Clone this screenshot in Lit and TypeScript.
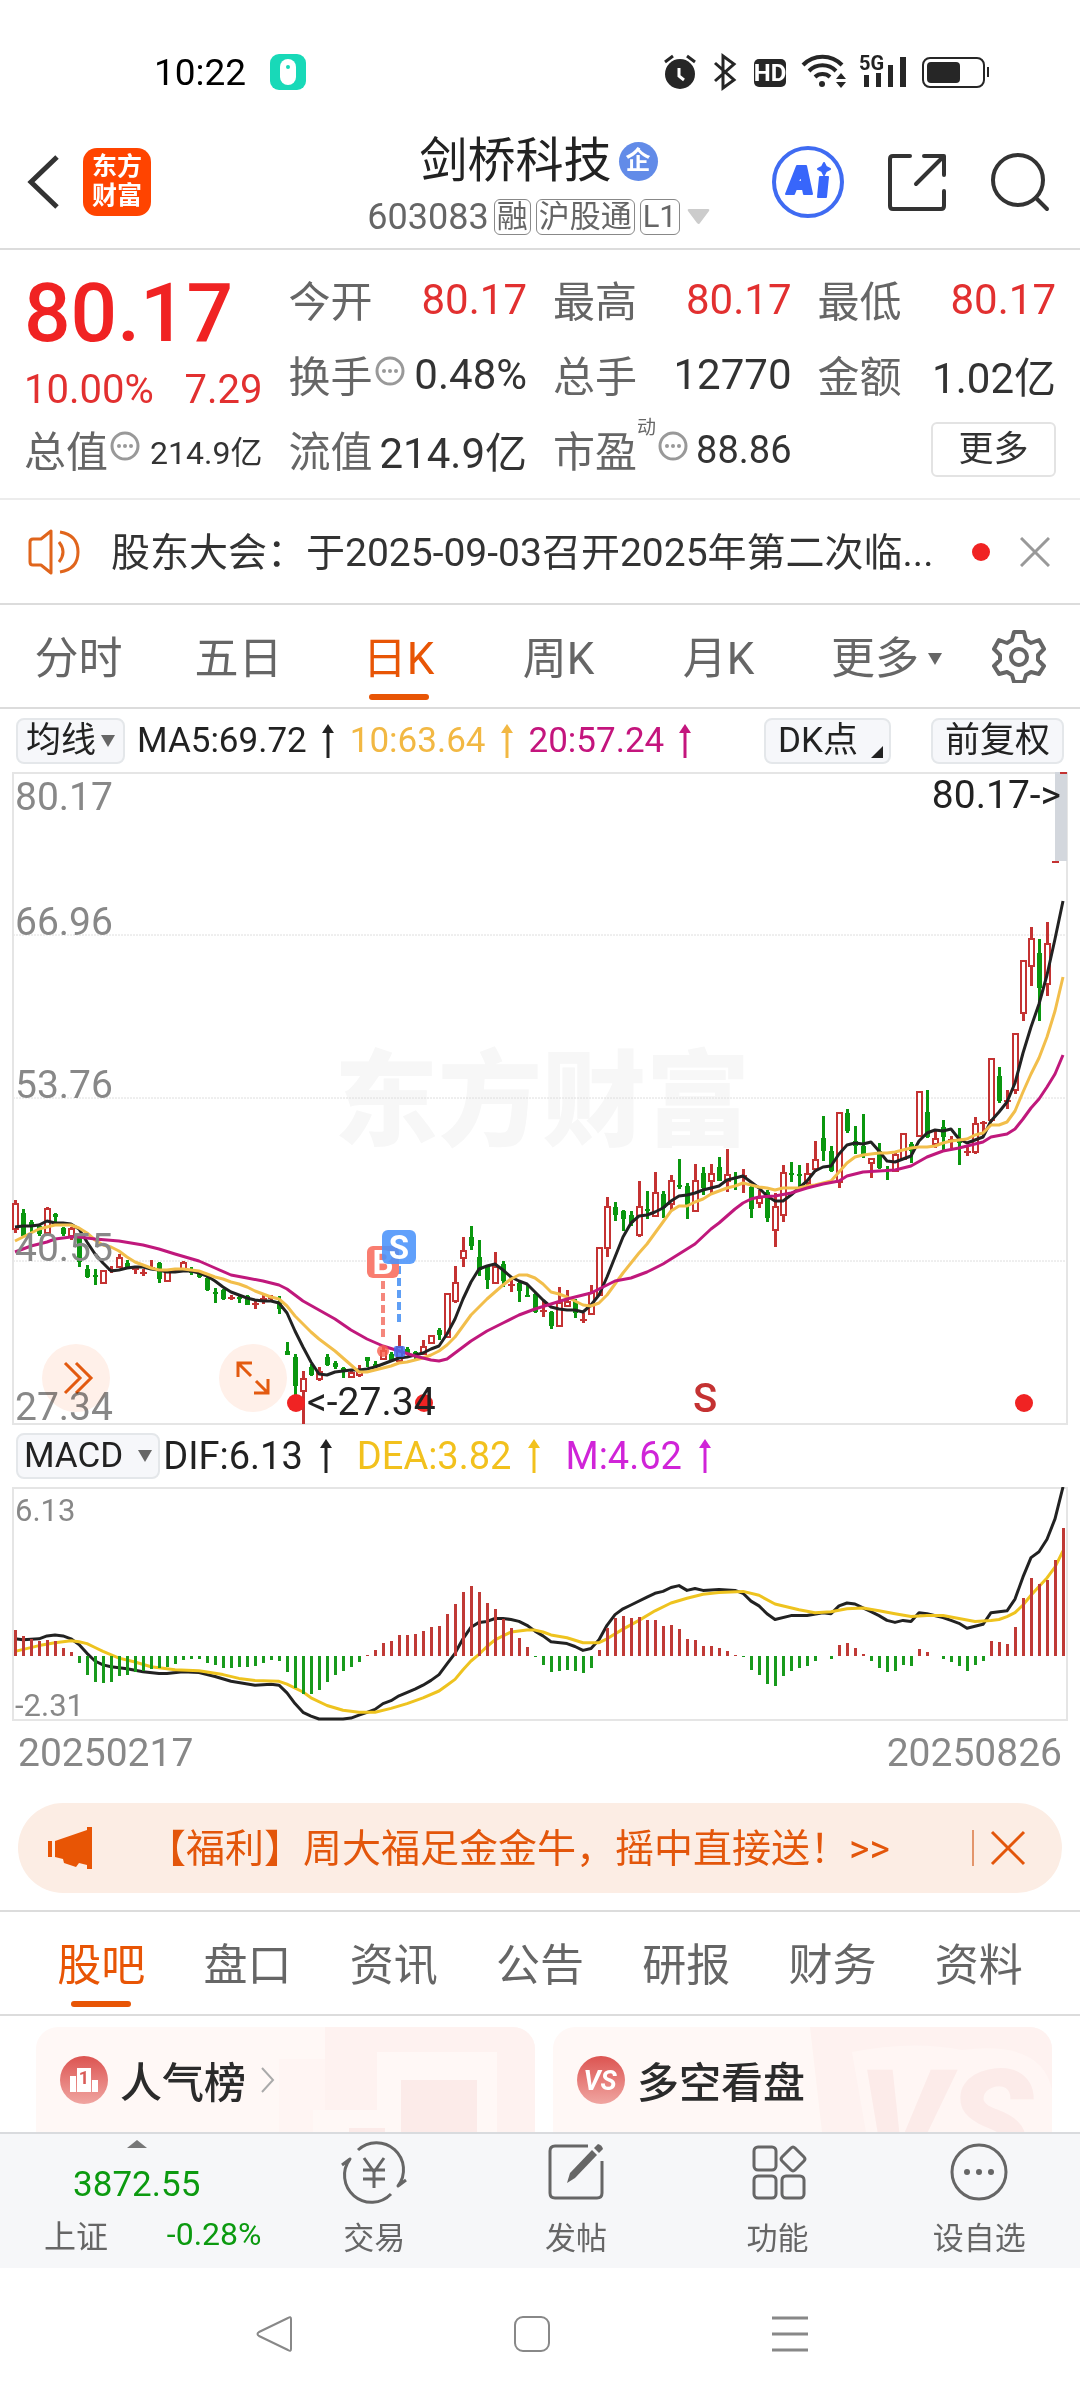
import { LitElement, html, svg, css } from "lit";
import { customElement } from "lit/decorators.js";

type Candle = [string, number, number, number, number];
type Point = [number, number];

/* One entry per trading day: direction, high, low, body top, body bottom (chart units). */
const CANDLES: Candle[] = [
  ["r", 428, 461, 432, 457], ["g", 437, 464, 441, 464], ["g", 448, 460, 450, 453], ["g", 453, 464, 454, 462],
  ["r", 435, 463, 437, 461], ["g", 441, 450, 442, 445], ["g", 455, 464, 456, 462], ["r", 455, 468, 457, 464],
  ["g", 464, 495, 465, 490], ["g", 493, 506, 497, 505], ["g", 497, 513, 503, 505], ["r", 499, 512, 499, 511],
  ["r", 494, 501, 497, 499], ["r", 482, 496, 486, 495], ["g", 488, 497, 491, 497], ["r", 494, 502, 496, 497],
  ["r", 497, 504, 500, 502], ["r", 488, 498, 495, 497], ["g", 490, 511, 491, 507], ["r", 498, 510, 500, 509],
  ["r", 498, 500, 498, 500], ["r", 489, 499, 491, 497], ["g", 495, 503, 497, 501], ["g", 500, 506, 501, 505],
  ["g", 505, 519, 506, 518], ["g", 516, 531, 520, 521], ["g", 517, 528, 518, 527], ["r", 523, 528, 525, 527],
  ["g", 523, 531, 525, 526], ["g", 523, 533, 524, 533], ["r", 528, 537, 531, 533], ["r", 523, 532, 526, 528],
  ["r", 523, 529, 525, 528], ["g", 524, 542, 529, 537], ["g", 570, 583, 579, 583], ["g", 582, 626, 585, 614],
  ["r", 599, 652, 607, 619], ["g", 592, 604, 595, 603], ["r", 595, 609, 600, 607], ["g", 582, 594, 585, 593],
  ["g", 589, 597, 591, 595], ["g", 595, 606, 596, 599], ["r", 599, 605, 601, 605], ["r", 593, 605, 599, 603],
  ["g", 585, 595, 585, 589], ["g", 589, 596, 592, 593], ["r", 575, 588, 579, 587], ["g", 580, 589, 582, 588],
  ["r", 563, 590, 575, 589], ["g", 575, 583, 577, 581], ["g", 579, 588, 580, 581], ["r", 568, 583, 575, 582],
  ["r", 563, 571, 564, 571], ["g", 556, 568, 558, 563], ["r", 521, 565, 522, 565], ["r", 494, 531, 511, 529],
  ["r", 465, 495, 479, 486], ["g", 454, 478, 465, 474], ["g", 468, 504, 485, 498], ["g", 493, 517, 494, 508],
  ["r", 480, 512, 495, 511], ["g", 489, 515, 492, 509], ["r", 508, 520, 512, 513], ["g", 509, 530, 511, 519],
  ["g", 513, 525, 523, 525], ["g", 521, 541, 522, 540], ["r", 528, 545, 538, 541], ["g", 539, 557, 540, 554],
  ["r", 515, 555, 531, 554], ["r", 518, 535, 530, 534], ["g", 527, 546, 529, 541], ["r", 541, 551, 547, 549],
  ["r", 513, 543, 521, 542], ["r", 475, 524, 476, 523], ["r", 425, 485, 435, 476], ["g", 430, 449, 435, 443],
  ["g", 438, 459, 439, 447], ["g", 439, 454, 443, 451], ["r", 409, 465, 435, 463], ["g", 419, 447, 437, 438],
  ["r", 400, 445, 421, 444], ["g", 419, 446, 422, 436], ["r", 403, 439, 409, 432], ["g", 387, 417, 413, 415],
  ["g", 411, 447, 414, 434], ["r", 392, 439, 409, 439], ["g", 395, 423, 401, 416], ["r", 392, 421, 402, 409],
  ["g", 385, 409, 395, 409], ["r", 377, 420, 403, 409], ["g", 400, 418, 405, 406], ["r", 397, 421, 403, 405],
  ["g", 414, 446, 415, 437], ["r", 418, 436, 426, 431], ["g", 418, 450, 420, 446], ["r", 421, 475, 435, 458],
  ["r", 393, 450, 401, 443], ["g", 390, 410, 401, 402], ["g", 393, 415, 402, 403], ["r", 391, 413, 402, 411],
  ["r", 369, 400, 388, 397], ["g", 344, 389, 366, 379], ["g", 374, 400, 379, 399], ["r", 340, 416, 341, 410],
  ["g", 337, 361, 341, 359], ["g", 354, 382, 369, 374], ["g", 342, 386, 374, 384], ["r", 386, 406, 387, 391],
  ["g", 371, 397, 379, 396], ["g", 394, 408, 397, 398], ["r", 379, 400, 383, 399], ["r", 362, 388, 362, 387],
  ["g", 370, 391, 372, 379], ["r", 319, 365, 320, 364], ["g", 318, 366, 340, 365], ["r", 359, 376, 367, 372],
  ["g", 348, 378, 355, 365], ["r", 364, 376, 367, 369], ["g", 356, 393, 369, 370], ["r", 374, 384, 379, 381],
  ["r", 345, 382, 352, 380], ["r", 349, 364, 350, 353], ["r", 286, 350, 287, 348], ["g", 295, 331, 304, 329],
  ["r", 318, 337, 328, 330], ["r", 261, 322, 262, 318], ["r", 188, 249, 189, 241], ["r", 155, 214, 167, 194],
  ["g", 167, 249, 181, 216], ["r", 150, 224, 172, 212], ["r", 89, 91, 89, 91], ["r", 0, 2, 0, 2],
];

const MA5: number[] = [
  455, 454, 454, 453, 449, 451, 451, 452, 457, 470, 482, 491, 499, 498, 496, 495, 495, 497, 498, 500, 500, 499, 499,
  501, 504, 509, 515, 520, 523, 526, 528, 529, 529, 531, 541, 559, 575, 590, 602, 603, 600, 599, 598, 598, 597, 595,
  592, 589, 586, 585, 583, 581, 577, 574, 562, 547, 527, 510, 497, 494, 492, 498, 505, 509, 512, 520, 528, 535, 537,
  538, 538, 540, 533, 523, 505, 485, 465, 451, 444, 443, 440, 436, 429, 424, 423, 421, 418, 416, 414, 408, 406, 404,
  410, 416, 424, 429, 429, 423, 416, 409, 399, 395, 394, 382, 373, 371, 372, 370, 379, 389, 390, 387, 384, 369, 361,
  358, 359, 357, 367, 371, 368, 365, 349, 340, 330, 311, 281, 255, 232, 203, 167, 129,
];
const MA10: number[] = [
  469, 465, 461, 457, 455, 453, 453, 453, 456, 461, 468, 473, 475, 479, 485, 490, 493, 496, 498, 498, 497, 497, 498,
  499, 502, 505, 507, 510, 512, 515, 519, 522, 525, 527, 534, 544, 552, 560, 567, 573, 579, 586, 593, 600, 600, 598,
  596, 594, 591, 590, 588, 586, 583, 579, 573, 565, 554, 543, 535, 527, 520, 513, 507, 503, 503, 506, 512, 520, 522,
  525, 529, 533, 534, 531, 523, 512, 501, 491, 481, 472, 461, 450, 439, 434, 434, 430, 427, 422, 419, 416, 414, 411,
  413, 415, 416, 418, 416, 416, 416, 414, 413, 411, 409, 400, 391, 385, 383, 382, 381, 381, 380, 378, 376, 375, 375,
  374, 371, 369, 368, 367, 363, 361, 353, 353, 350, 339, 320, 302, 286, 265, 239, 205,
];
const MA20: Point[] = [
  [0, 480], [2, 474], [4, 470], [5, 467], [7, 465], [8, 465], [10, 467], [13, 469], [16, 473], [18, 477], [20, 482],
  [23, 489], [25, 496], [27, 503], [29, 506], [31, 509], [33, 513], [34, 517], [36, 529], [38, 538], [40, 547],
  [42, 558], [44, 567], [46, 574], [48, 579], [50, 584], [52, 588], [53, 589], [54, 587], [55, 581], [57, 569],
  [59, 559], [61, 551], [63, 543], [65, 537], [67, 532], [69, 527], [71, 523], [72, 521], [73, 517], [74, 513],
  [75, 509], [77, 506], [79, 500], [81, 492], [83, 482], [85, 472], [87, 457], [88, 451], [90, 437], [91, 431],
  [92, 427], [93, 425], [95, 424], [97, 421], [99, 416], [101, 412], [103, 409], [104, 404], [106, 400], [108, 399],
  [110, 398], [112, 394], [114, 385], [116, 379], [118, 376], [120, 372], [121, 370], [122, 365], [124, 362],
  [125, 357], [126, 347], [127, 336], [128, 327], [129, 315], [130, 302], [131, 283],
];

const HISTOGRAM: number[] = [
  27, 21, 18, 15, 17, 16, 8, 4, -7, -20, -27, -28, -27, -21, -20, -17, -15, -13, -12, -11, -8, -4, -3, -3, -7, -9, -12,
  -12, -11, -11, -10, -7, -4, -5, -17, -33, -39, -39, -35, -27, -20, -16, -11, -6, 1, 6, 13, 16, 22, 22, 23, 26, 30,
  31, 43, 54, 66, 72, 66, 55, 49, 38, 29, 19, 9, -1, -9, -17, -15, -14, -16, -18, -12, 6, 29, 39, 41, 39, 40, 37, 37,
  31, 32, 28, 18, 17, 10, 10, 8, 5, 1, -1, -14, -20, -29, -31, -21, -16, -12, -10, -5, 0, -3, 11, 13, 8, 2, -5, -12,
  -17, -15, -9, -10, 7, 4, 0, -3, -6, -10, -15, -9, -5, 16, 14, 12, 30, 60, 81, 74, 79, 99, 132,
];
const DIF: Point[] = [
  [0, 157], [1, 158], [3, 157], [4, 154], [5, 153], [6, 154], [7, 157], [8, 163], [9, 172], [10, 180], [11, 184],
  [12, 186], [14, 188], [16, 191], [18, 193], [19, 193], [21, 191], [23, 192], [25, 196], [27, 201], [30, 205],
  [32, 204], [33, 205], [34, 213], [35, 224], [36, 233], [37, 237], [38, 240], [41, 240], [42, 239], [43, 236],
  [44, 233], [45, 230], [46, 224], [47, 221], [48, 216], [50, 209], [51, 205], [52, 200], [53, 194], [54, 183],
  [55, 172], [56, 157], [57, 145], [58, 140], [59, 139], [60, 136], [61, 136], [62, 137], [63, 139], [64, 143],
  [65, 149], [66, 154], [67, 160], [69, 162], [70, 165], [71, 169], [72, 167], [73, 158], [74, 143], [75, 132],
  [76, 126], [77, 122], [79, 114], [80, 110], [81, 108], [82, 104], [83, 102], [84, 107], [85, 105], [86, 107],
  [88, 106], [90, 107], [91, 110], [92, 118], [93, 123], [94, 131], [95, 137], [97, 133], [99, 133], [101, 130],
  [102, 131], [103, 123], [104, 120], [105, 121], [106, 125], [107, 129], [108, 133], [109, 138], [110, 140],
  [111, 138], [112, 139], [113, 130], [114, 131], [116, 135], [117, 138], [118, 141], [119, 146], [120, 144],
  [121, 142], [122, 130], [124, 128], [125, 116], [126, 93], [127, 73], [128, 67], [129, 54], [130, 33], [131, 0],
];
const DEA: Point[] = [
  [0, 170], [3, 164], [5, 161], [7, 159], [8, 160], [9, 162], [10, 166], [11, 170], [13, 177], [15, 181], [17, 186],
  [20, 189], [23, 190], [26, 194], [28, 198], [30, 200], [33, 201], [34, 204], [36, 212], [37, 218], [39, 226],
  [41, 231], [43, 233], [45, 233], [47, 229], [49, 224], [51, 218], [53, 211], [54, 205], [55, 199], [56, 189],
  [57, 180], [58, 173], [59, 165], [60, 158], [61, 154], [62, 150], [64, 148], [65, 148], [66, 150], [67, 153],
  [69, 156], [71, 161], [73, 161], [74, 157], [76, 147], [78, 138], [80, 128], [82, 120], [84, 115], [86, 111],
  [88, 109], [91, 108], [93, 112], [95, 121], [98, 127], [100, 130], [102, 129], [104, 126], [106, 125], [108, 128],
  [110, 131], [112, 134], [114, 133], [116, 133], [118, 136], [120, 139], [122, 138], [123, 137], [124, 134],
  [125, 130], [126, 122], [127, 112], [128, 103], [129, 94], [130, 83], [131, 66],
];

const STEP = 8;
const xAt = (day: number) => 3 + day * STEP;
const line = (points: Point[], scale = 1) =>
  points.map(([day, y]) => `${xAt(day)},${Math.round(y * scale * 10) / 10}`).join(" ");
const daily = (values: number[]): Point[] => values.map((y, day) => [day, y]);

/* The MACD values are stored for a panel of 241 units and drawn in one of 233. */
const MACD_SCALE = 233 / 241;
const MACD_ZERO = 169;

const upArrow = () => html`<svg class="arrow" viewBox="0 0 14 34" aria-hidden="true">
  <path d="M7 3V34" stroke="currentColor" stroke-width="3" /><path d="M7 0l6 9H1z" fill="currentColor" />
</svg>`;
const caret = () => html`<svg class="caret" viewBox="0 0 14 14" aria-hidden="true">
  <path d="M0 1h14L7 13z" fill="currentColor" />
</svg>`;
const infoDots = () => html`<svg class="info" viewBox="0 0 30 30" aria-hidden="true">
  <circle cx="15" cy="15" r="13" fill="none" stroke="#999" stroke-width="3" />
  <circle cx="9" cy="15" r="2" fill="#999" /><circle cx="15" cy="15" r="2" fill="#999" />
  <circle cx="21" cy="15" r="2" fill="#999" />
</svg>`;

const sharedText = css`
  :host {
    display: block;
    font-family: Roboto, "Noto Sans CJK SC", sans-serif;
  }
  svg {
    display: block;
    flex: none;
  }
`;

@customElement("kline-chart")
export class KlineChart extends LitElement {
  static styles = [
    sharedText,
    css`
      .frame { position: relative; }
      .plot { width: 100%; height: auto; }
      .axis { font-size: 39px; fill: #888; }
      .note { font-size: 39px; fill: #222; }
      .watermark { font-size: 104px; font-weight: 900; fill: #f7f7f7; }
      .mark { font-size: 33px; font-weight: 700; fill: #fff; text-anchor: middle; }
      .signal { font-size: 40px; font-weight: 500; fill: #c43232; text-anchor: middle; }
      .float {
        position: absolute;
        bottom: 13px;
        width: 68px;
        height: 68px;
        padding: 0;
        border: 0;
        border-radius: 50%;
        background: #fff0e9;
        mix-blend-mode: multiply;
        display: grid;
        place-items: center;
      }
      .float svg { width: 36px; height: 36px; }
      .forward { left: 30px; }
      .expand { left: 207px; }
    `,
  ];

  private candle([kind, high, low, top, bottom]: Candle, day: number) {
    const x = xAt(day);
    if (kind === "g") {
      return svg`<rect x=${x - 1} y=${high} width="3" height=${low - high} fill="#0a970f" />
        <rect x=${x - 2} y=${top} width="5" height=${Math.max(bottom - top, 2)} fill="#0a970f" />`;
    }
    if (bottom - top < 4) {
      return svg`<rect x=${x - 1} y=${high} width="3" height=${low - high} fill="#c43232" />
        <rect x=${x - 3} y=${top} width="7" height="2" fill="#c43232" />`;
    }
    return svg`<rect x=${x - 1} y=${high} width="3" height=${low - high} fill="#c43232" />
      <rect x=${x - 2} y=${top} width="5" height=${bottom - top} fill="#fff" stroke="#c43232" stroke-width="2" />`;
  }

  render() {
    return html`<div class="frame">
      <svg class="plot" viewBox="0 0 1056 653" role="img" aria-label="日K线图">
        <text class="watermark" x="322" y="366">东方财富</text>
        ${[163, 326, 489].map(
          (y) => svg`<path d="M1 ${y}H1055" stroke="#dedede" stroke-width="1" stroke-dasharray="2 1" />`,
        )}
        <rect x="1" y="1" width="1054" height="651" fill="none" stroke="#e5e5e5" stroke-width="2" />
        <rect x="1043" y="0" width="12" height="89" fill="#d3d7dd" />
        ${CANDLES.map((c, day) => this.candle(c, day))}
        <g fill="none" stroke-width="3" stroke-linejoin="round">
          <polyline points=${line(daily(MA5))} stroke="#222" />
          <polyline points=${line(daily(MA10))} stroke="#f2be4b" />
          <polyline points=${line(MA20)} stroke="#c0187c" />
        </g>
        <circle cx="371" cy="579" r="6" fill="#f7604f" fill-opacity=".8" />
        <rect x="382" y="574" width="11" height="11" rx="2" fill="#3f6df0" fill-opacity=".85" />
        <g fill="none" stroke-width="4" stroke-dasharray="8 4">
          <path d="M371 509V566" stroke="#f5877c" /><path d="M387 494V550" stroke="#5f9ff5" />
        </g>
        <rect x="355" y="474" width="32" height="32" rx="6" fill="#f97d70" />
        <text class="mark" x="371" y="502">B</text>
        <rect x="370" y="458" width="34" height="34" rx="6" fill="#4a93fb" fill-opacity=".88" />
        <text class="mark" x="387" y="487">S</text>
        <g fill="#f02323">
          <circle cx="284" cy="631" r="9" /><circle cx="412" cy="631" r="9" /><circle cx="1012" cy="631" r="9" />
        </g>
        <text class="signal" x="693" y="640">S</text>
        <text class="axis" x="3" y="38">80.17</text>
        <text class="axis" x="3" y="163">66.96</text>
        <text class="axis" x="3" y="326">53.76</text>
        <text class="axis" x="3" y="489">40.55</text>
        <text class="axis" x="3" y="648">27.34</text>
        <text class="note" x="1049" y="36" text-anchor="end">80.17-&gt;</text>
        <text class="note" x="295" y="643">&lt;-27.34</text>
      </svg>
      <button class="float forward" aria-label="快进">
        <svg viewBox="0 0 36 36" fill="none" stroke="#e35a10" stroke-width="3">
          <path d="M7 3l15 15L7 33M18 3l15 15-15 15" />
        </svg>
      </button>
      <button class="float expand" aria-label="全屏">
        <svg viewBox="0 0 36 36" fill="none" stroke="#e35a10" stroke-width="3">
          <path d="M3 17V3h14M3 3l13 13M33 19v14H19M33 33L21 21" />
        </svg>
      </button>
    </div>`;
  }
}

@customElement("macd-chart")
export class MacdChart extends LitElement {
  static styles = [
    sharedText,
    css`
      .plot { width: 100%; height: auto; }
      .axis { font-size: 31px; fill: #888; }
    `,
  ];

  private bar(value: number, day: number) {
    const height = Math.round(Math.abs(value) * MACD_SCALE);
    return svg`<rect x=${xAt(day) - 1} y=${value > 0 ? MACD_ZERO - height : MACD_ZERO} width="3" height=${height}
      fill=${value > 0 ? "#c03a36" : "#189a1c"} />`;
  }

  render() {
    return html`<svg class="plot" viewBox="0 0 1056 234" role="img" aria-label="MACD">
      <rect x="1" y="1" width="1054" height="232" fill="none" stroke="#e5e5e5" stroke-width="2" />
      <text class="axis" x="3" y="34">6.13</text>
      <text class="axis" x="3" y="229">-2.31</text>
      <g fill="none" stroke-width="3" stroke-linejoin="round">
        <polyline points=${line(DIF, MACD_SCALE)} stroke="#222" />
        <polyline points=${line(DEA, MACD_SCALE)} stroke="#eec31f" />
      </g>
      ${HISTOGRAM.map((v, day) => this.bar(v, day))}
    </svg>`;
  }
}

@customElement("app-root")
export class AppRoot extends LitElement {
  static styles = [
    sharedText,
    css`
      :host { background: #fff; color: #222; }
      * { box-sizing: border-box; }
      button { font: inherit; color: inherit; background: none; border: 0; padding: 0; margin: 0; }
      a { color: inherit; text-decoration: none; }
      dl, dd, dt, h1, h2, p { margin: 0; font-weight: 400; }

      .status { display: flex; align-items: center; justify-content: space-between; height: 114px; padding: 30px 90px 0 154px; }
      .clock { display: flex; align-items: center; gap: 24px; font-size: 37px; color: #000; }
      .clock svg { width: 36px; height: 36px; }
      .system svg { width: 326px; height: 36px; overflow: visible; }
      .hd { font-size: 24px; font-weight: 700; fill: #fff; }
      .net { font-size: 20px; font-weight: 700; fill: #222; }

      .top { display: grid; grid-template-columns: 1fr auto 1fr; align-items: center; height: 136px; padding: 0 30px 0 27px; border-bottom: 2px solid #dcdcdc; }
      .left, .right { display: flex; align-items: center; padding-top: 2px; }
      .left { gap: 24px; }
      .left .back svg { width: 32px; height: 56px; }
      .logo { width: 68px; height: 68px; border-radius: 14px; background: #ff4400; color: #fff; font-size: 25px; font-weight: 700; line-height: 29px; text-align: center; padding: 4px 8px; }
      .right { justify-content: flex-end; gap: 43px; }
      .ai svg { width: 72px; height: 72px; }
      .share svg, .search svg { width: 60px; height: 60px; }
      .title { display: flex; flex-direction: column; align-items: center; gap: 7px; padding-top: 9px; }
      .name { display: flex; align-items: center; gap: 7px; }
      .name h1 { font-size: 48px; line-height: 56px; }
      .corp { width: 39px; height: 39px; border-radius: 50%; background: #628be8; color: #fff; font-size: 25px; font-weight: 700; line-height: 38px; text-align: center; }
      .code { display: flex; align-items: center; gap: 5px; font-size: 36px; line-height: 42px; color: #666; }
      .tag { font-size: 31px; line-height: 34px; padding: 0 2px; border: 1px solid #888; border-radius: 6px; }
      .pick { padding-left: 2px; }
      .pick svg { width: 23px; height: 16px; }

      .quote { display: grid; grid-template-columns: repeat(4, 1fr); grid-auto-rows: 75px; column-gap: 26px; padding: 12px 24px 11px 24px; border-bottom: 2px solid #ececec; font-size: 42px; }
      .price { grid-row: span 2; color: #f02323; }
      .last { font-size: 82px; line-height: 102px; font-weight: 500; }
      .change { display: flex; justify-content: space-between; font-size: 40px; line-height: 52px; color: #e23030; }
      .cell { display: flex; align-items: center; justify-content: space-between; white-space: nowrap; }
      .cell dt { display: flex; align-items: center; color: #666; padding-bottom: 2px; }
      .cell dd { color: #333; }
      .cell .up { color: #e23030; }
      .cell .small { font-size: 32px; }
      .cell .mid { font-size: 38px; }
      .info { width: 30px; height: 30px; margin: 0 0 6px 2px; }
      .sup { font-size: 19px; align-self: flex-start; line-height: 20px; }
      .more { display: flex; align-items: center; justify-content: flex-end; }
      .more button { width: 125px; height: 55px; border: 2px solid #e3e3e3; border-radius: 6px; font-size: 35px; line-height: 48px; color: #333; }

      .notice { display: flex; align-items: center; height: 105px; padding: 0 30px 0 28px; border-bottom: 2px solid #dcdcdc; font-size: 39px; color: #333; }
      .horn { width: 52px; height: 46px; margin-right: 31px; }
      .notice p { flex: 1; white-space: nowrap; padding-bottom: 6px; }
      .unread { width: 18px; height: 18px; border-radius: 50%; background: #f02323; margin-right: 30px; }
      .close svg { width: 30px; height: 30px; }

      .periods { display: grid; grid-template-columns: repeat(5, 160fr) 176fr 86fr; height: 104px; padding-right: 18px; border-bottom: 2px solid #dcdcdc; }
      .tab { display: flex; flex-direction: column; align-items: center; justify-content: flex-end; gap: 5px; font-size: 44px; line-height: 60px; color: #666; white-space: nowrap; padding-bottom: 7px; }
      .tab::after { content: ""; width: 60px; height: 6px; border-radius: 3px; }
      .periods .tab { padding-right: 3px; }
      .tab.on { color: #e85505; }
      .tab.on::after { background: #e85505; }
      .drop { display: flex; align-items: center; gap: 9px; }
      .gear { display: grid; place-items: center; }
      .gear svg { width: 54px; height: 54px; }
      .caret { width: 14px; height: 14px; color: #666; }

      .legend { display: flex; align-items: center; height: 63px; padding: 0 16px; font-size: 35px; white-space: nowrap; }
      .legend .pill { display: flex; align-items: center; gap: 5px; height: 46px; padding: 0 8px; border: 2px solid #e4e7ea; border-radius: 8px; background: #f6f7fa; line-height: 40px; }
      .series { display: flex; align-items: center; gap: 14px; margin-right: 15px; }
      .arrow { width: 14px; height: 34px; }
      .pill + .series { margin-left: 12px; }
      .c5 { color: #222; }
      .c10 { color: #f2b843; }
      .c20 { color: #c4157d; }
      .options { margin-left: auto; display: flex; gap: 40px; }
      .legend .options .pill { padding: 0 12px; }
      .corner { width: 12px; height: 12px; align-self: flex-end; margin: 0 -6px 4px 8px; }
      .legend.macd { height: 62px; }
      .macd .series { font-size: 38px; gap: 16px; margin-right: 24px; }
      .legend.macd .pill { gap: 15px; padding: 0 6px; }
      .macd .pill + .series { margin-left: 3px; }
      .cdea { color: #f2c11d; }
      .cm { color: #d024d8; }
      .chart { padding: 0 12px; }
      .dates { display: flex; justify-content: space-between; align-items: center; height: 64px; padding: 0 18px; font-size: 39px; color: #888; }

      .banner { display: flex; align-items: center; height: 90px; margin: 18px 18px 17px; padding: 0 36px 0 28px; border-radius: 45px; background: #fcede4; color: #e3560b; font-size: 39px; white-space: nowrap; }
      .banner .speaker { width: 48px; height: 42px; margin-right: 53px; }
      .banner a { flex: 1; padding-bottom: 6px; }
      .banner .close { border-left: 2px solid #e3956b; padding-left: 16px; }
      .banner .close svg { width: 36px; height: 36px; }

      .sections { display: grid; grid-template-columns: repeat(7, 1fr); height: 106px; padding: 0 28px; border-top: 2px solid #dcdcdc; border-bottom: 2px solid #dcdcdc; }

      .cards { display: grid; grid-template-columns: 1fr 1fr; gap: 18px; padding: 11px 28px 0 36px; }
      .card { position: relative; display: flex; align-items: center; height: 105px; padding: 0 24px; border-radius: 22px 22px 0 0; overflow: hidden; background: #fff8f6; }
      .deco { position: absolute; right: 0; top: 0; height: 105px; width: 256px; }
      .badge { width: 48px; height: 48px; margin-right: 12px; z-index: 1; }
      .card h2 { font-size: 42px; font-weight: 500; color: #2b2b2b; z-index: 1; }
      .chev { width: 16px; height: 26px; margin-left: 14px; z-index: 1; }
      .vs { font-size: 27px; font-weight: 700; font-style: italic; fill: #fff; text-anchor: middle; }
      .one { font-size: 18px; font-weight: 700; fill: #d95c58; text-anchor: middle; }
      .ghost { font-size: 140px; font-weight: 900; font-style: italic; fill: #fcebe9; }

      .bar { display: grid; grid-template-columns: 274fr repeat(4, 202fr); height: 136px; background: #f6f7f9; border-top: 2px solid #d9dbde; color: #666; }
      .index { display: grid; grid-template-rows: 20px 60px 40px; justify-items: center; align-items: center; font-size: 35px; color: #0c9a10; }
      .index > svg { width: 20px; height: 8px; }
      .pair { display: flex; align-items: center; justify-content: space-between; width: 100%; padding: 0 12px 0 44px; font-size: 32px; }
      .pair .market { color: #666; }
      .action { display: flex; flex-direction: column; align-items: center; gap: 14px; padding-top: 8px; font-size: 31px; line-height: 46px; }
      .action svg { width: 66px; height: 60px; overflow: visible; }

      .nav { display: grid; grid-template-columns: repeat(3, 1fr); height: 132px; padding: 0 161px 0 145px; }
      .nav button { display: grid; place-items: center; }
      .nav svg { width: 38px; height: 38px; }
    `,
  ];

  private statusBar() {
    return html`<div class="status">
      <div class="clock">
        <span>10:22</span>
        <svg viewBox="0 0 36 36">
          <rect width="36" height="36" rx="9" fill="#18d9b8" />
          <rect x="10" y="5" width="16" height="26" rx="8" fill="#fff" />
          <circle cx="18" cy="13" r="2" fill="#18d9b8" />
        </svg>
      </div>
      <div class="system">
        <svg viewBox="664 54 326 36" role="img" aria-label="系统状态">
          <g fill="none" stroke="#262626" stroke-width="3">
            <path d="M665 62l8-6M687 56l8 6" />
            <path d="M715 63l19 17-11 8V56l11 8-19 17" />
            <rect x="923" y="58" width="61" height="29" rx="7" stroke-width="2" />
            <path d="M988 67v10" stroke-width="2" />
          </g>
          <circle cx="680" cy="74" r="15" fill="#262626" />
          <path d="M679 68v8l5 4" fill="none" stroke="#fff" stroke-width="3" />
          <rect x="754" y="59" width="32" height="28" rx="5" fill="#262626" />
          <text class="hd" x="770" y="81" text-anchor="middle">HD</text>
          <g fill="none" stroke="#262626" stroke-width="4">
            <path d="M803 65A27 27 0 0 1 842 65M809 71A19 19 0 0 1 836 71M815 77A11 11 0 0 1 830 77" />
          </g>
          <circle cx="822" cy="84" r="3" fill="#262626" />
          <path d="M836 79l5-6 5 6zM836 82l5 6 5-6z" fill="#262626" />
          <text class="net" x="859" y="70">5G</text>
          <path d="M864 75h5v12h-5zM876 73h5v14h-5zM888 65h5v22h-5zM900 57h6v30h-6z" fill="#262626" />
          <rect x="927" y="62" width="33" height="21" rx="4" fill="#262626" />
        </svg>
      </div>
    </div>`;
  }

  private header() {
    return html`<header class="top">
      <div class="left">
        <button class="back" aria-label="返回">
          <svg viewBox="0 0 32 56" fill="none" stroke="#333" stroke-width="5"><path d="M30 3L4 28l26 25" /></svg>
        </button>
        <div class="logo">东方<br />财富</div>
      </div>
      <div class="title">
        <div class="name"><h1>剑桥科技</h1><span class="corp">企</span></div>
        <div class="code">
          <span>603083</span><span class="tag">融</span><span class="tag">沪股通</span><span class="tag">L1</span>
          <button class="pick" aria-label="切换股票">
            <svg viewBox="0 0 23 16"><path d="M2 0h19q2 0 1 2l-9 12q-1 2-3 0L1 2q-1-2 1-2z" fill="#ccc" /></svg>
          </button>
        </div>
      </div>
      <div class="right">
        <button class="ai" aria-label="AI助手">
          <svg viewBox="0 0 72 72">
            <circle cx="36" cy="36" r="34" fill="none" stroke="#3f6bf2" stroke-width="4" />
            <g fill="#3866fb" stroke="#3866fb" stroke-width="2" stroke-linejoin="round">
              <path fill-rule="evenodd" d="M14 48L25 20h9l6 28h-8l-1-5h-7l-2 5zM26 36h4l-1-8z" />
              <path d="M48 31h8l-2 20h-8z" />
              <path d="M52 17l2 4 4 2-4 2-2 4-2-4-4-2 4-2z" />
            </g>
          </svg>
        </button>
        <button class="share" aria-label="分享">
          <svg viewBox="0 0 60 60" fill="none" stroke="#333" stroke-width="4" stroke-linecap="round" stroke-linejoin="round">
            <path d="M23 4H6q-3 0-3 3v47q0 3 3 3h48q3 0 3-3V39M37 4h20v19M56 5L29 32" />
          </svg>
        </button>
        <button class="search" aria-label="搜索">
          <svg viewBox="0 0 60 60" fill="none" stroke="#333" stroke-width="4" stroke-linecap="round">
            <circle cx="28" cy="28" r="25" /><path d="M46 46l11 11" />
          </svg>
        </button>
      </div>
    </header>`;
  }

  private quote() {
    return html`<dl class="quote">
      <div class="price">
        <dd class="last">80.17</dd>
        <dd class="change"><span>10.00%</span><span>7.29</span></dd>
      </div>
      <div class="cell"><dt>今开</dt><dd class="up">80.17</dd></div>
      <div class="cell"><dt>最高</dt><dd class="up">80.17</dd></div>
      <div class="cell"><dt>最低</dt><dd class="up">80.17</dd></div>
      <div class="cell"><dt>换手${infoDots()}</dt><dd>0.48%</dd></div>
      <div class="cell"><dt>总手</dt><dd>12770</dd></div>
      <div class="cell"><dt>金额</dt><dd>1.02亿</dd></div>
      <div class="cell"><dt>总值${infoDots()}</dt><dd class="small">214.9亿</dd></div>
      <div class="cell"><dt>流值</dt><dd>214.9亿</dd></div>
      <div class="cell"><dt>市盈<span class="sup">动</span>${infoDots()}</dt><dd class="mid">88.86</dd></div>
      <div class="more"><button>更多</button></div>
    </dl>`;
  }

  private notice() {
    return html`<div class="notice">
      <svg class="horn" viewBox="0 0 52 46" fill="none" stroke="#e0651c" stroke-width="3" stroke-linejoin="round">
        <path d="M2 13q0-3 3-3h8L23 2v42L13 36H5q-3 0-3-3zM31 13q8 10 0 20M32 3q18 3 18 20T32 43" />
      </svg>
      <p>股东大会：于2025-09-03召开2025年第二次临...</p>
      <span class="unread"></span>
      <button class="close" aria-label="关闭公告">
        <svg viewBox="0 0 30 30" stroke="#999" stroke-width="3"><path d="M1 1l28 28M29 1L1 29" /></svg>
      </button>
    </div>`;
  }

  private periods() {
    return html`<nav class="periods">
      ${["分时", "五日", "日K", "周K", "月K"].map(
        (label) => html`<button class=${label === "日K" ? "tab on" : "tab"}>${label}</button>`,
      )}
      <button class="tab"><span class="drop">更多${caret()}</span></button>
      <button class="gear" aria-label="设置">
        <svg viewBox="0 0 54 54" fill="none" stroke="#666" stroke-width="4" stroke-linejoin="round">
          <path d="M22 3h10l2 8 5 3 8-3 5 9-6 6v5l6 6-5 8-8-2-5 3-2 7H22l-2-7-5-3-8 2-5-8 6-6v-5l-6-6 5-9 8 3 5-3z" />
          <circle cx="27" cy="28" r="8" />
        </svg>
      </button>
    </nav>`;
  }

  private cards() {
    return html`<div class="cards">
      <a class="card" href="#rank">
        <svg class="deco" viewBox="0 0 256 105">
          <path d="M46 0h210v105H46z" fill="#fef2f0" /><path d="M0 32h46v73H0z" fill="#fff5f3" />
          <path d="M98 25h120v80H98zM34 83h64v22H34z" fill="#fff8f6" />
          <path d="M122 53h76v52h-76z" fill="#fcebe9" /><path d="M70 101h36v4H70z" fill="#fcebe9" />
        </svg>
        <svg class="badge" viewBox="0 0 48 48">
          <defs>
            <linearGradient id="rank" x2="0" y2="1"><stop stop-color="#dc5451" /><stop offset="1" stop-color="#f0a5a1" /></linearGradient>
          </defs>
          <circle cx="24" cy="24" r="24" fill="url(#rank)" />
          <path d="M10 20h6v16h-6zM17 12h14v24H17zM32 24h6v12h-6z" fill="#fff" />
          <text class="one" x="24" y="28">1</text>
        </svg>
        <h2>人气榜</h2>
        <svg class="chev" viewBox="0 0 16 26" fill="none" stroke="#aaa" stroke-width="2"><path d="M2 1l11 12L2 25" /></svg>
      </a>
      <a class="card" href="#sentiment">
        <svg class="deco" viewBox="0 0 256 105">
          <path d="M14 0h242v105H26z" fill="#fef2f0" />
          <path d="M56 25q60-12 110-2 80-10 90 40v42H70z" fill="#fff6f4" />
          <text class="ghost" x="62" y="143">VS</text>
        </svg>
        <svg class="badge" viewBox="0 0 48 48">
          <defs>
            <linearGradient id="versus" x2="0" y2="1"><stop stop-color="#dc5451" /><stop offset="1" stop-color="#f0a5a1" /></linearGradient>
          </defs>
          <circle cx="24" cy="24" r="24" fill="url(#versus)" /><text class="vs" x="23" y="34">VS</text>
        </svg>
        <h2>多空看盘</h2>
      </a>
    </div>`;
  }

  private bottomBar() {
    return html`<nav class="bar">
      <button class="index">
        <svg viewBox="0 0 20 8"><path d="M10 0l10 8H0z" fill="#777" /></svg>
        <span>3872.55</span>
        <span class="pair"><span class="market">上证</span><span>-0.28%</span></span>
      </button>
      <button class="action">
        <svg viewBox="0 0 66 60" fill="none" stroke="#666" stroke-width="3" stroke-linejoin="round">
          <path d="M17 8A27 27 0 0 1 57 44l8-6M50 52A27 27 0 0 1 9 17l-8 6" />
          <path d="M23 16l10 14 10-14M33 30v16M22 28h22M22 37h22" />
        </svg>
        交易
      </button>
      <button class="action">
        <svg viewBox="0 0 66 60" fill="none" stroke="#666" stroke-width="3">
          <path d="M45 4H12q-5 0-5 5v42q0 5 5 5h42q5 0 5-5V19" />
          <path d="M24 41l3-10 22-23 5 5-22 23z" fill="#666" stroke="none" />
          <path d="M51 6l4-4q4 1 5 5l-4 4z" fill="#666" stroke="none" />
        </svg>
        发帖
      </button>
      <button class="action">
        <svg viewBox="0 0 66 60" fill="none" stroke="#666" stroke-width="3" stroke-linejoin="round">
          <rect x="9" y="5" width="22" height="23" rx="4" /><rect x="9" y="34" width="22" height="22" rx="4" />
          <rect x="37" y="34" width="22" height="22" rx="4" />
          <path d="M46 6q2-2 4 0l9 9q2 2 0 4l-9 9q-2 2-4 0l-9-9q-2-2 0-4z" />
        </svg>
        功能
      </button>
      <button class="action">
        <svg viewBox="0 0 66 60">
          <circle cx="33" cy="30" r="27" fill="none" stroke="#666" stroke-width="3" />
          <circle cx="21" cy="30" r="3" fill="#666" /><circle cx="33" cy="30" r="3" fill="#666" />
          <circle cx="45" cy="30" r="3" fill="#666" />
        </svg>
        设自选
      </button>
    </nav>`;
  }

  render() {
    return html`
      ${this.statusBar()} ${this.header()} ${this.quote()} ${this.notice()} ${this.periods()}
      <div class="legend">
        <button class="pill">均线${caret()}</button>
        <span class="series c5">MA5:69.72${upArrow()}</span>
        <span class="series c10">10:63.64${upArrow()}</span>
        <span class="series c20">20:57.24${upArrow()}</span>
        <div class="options">
          <button class="pill">
            DK点<svg class="corner" viewBox="0 0 12 12"><path d="M12 0v12H0z" fill="#222" /></svg>
          </button>
          <button class="pill">前复权</button>
        </div>
      </div>
      <kline-chart class="chart"></kline-chart>
      <div class="legend macd">
        <button class="pill">MACD${caret()}</button>
        <span class="series c5">DIF:6.13${upArrow()}</span>
        <span class="series cdea">DEA:3.82${upArrow()}</span>
        <span class="series cm">M:4.62${upArrow()}</span>
      </div>
      <macd-chart class="chart"></macd-chart>
      <div class="dates"><time>20250217</time><time>20250826</time></div>
      <div class="banner">
        <svg class="speaker" viewBox="0 0 48 42" fill="#e85505">
          <path d="M2 14h4v16H2zM9 14l32-11V0h5v42h-5v-4l-8-2-3 4-12-4-1-4-8-2z" />
        </svg>
        <a href="#promo">【福利】周大福足金金牛，摇中直接送！&gt;&gt;</a>
        <button class="close" aria-label="关闭活动">
          <svg viewBox="0 0 36 36" stroke="#e3560b" stroke-width="3"><path d="M2 2l32 32M34 2L2 34" /></svg>
        </button>
      </div>
      <nav class="sections">
        ${["股吧", "盘口", "资讯", "公告", "研报", "财务", "资料"].map(
          (label, i) => html`<button class=${i === 0 ? "tab on" : "tab"}>${label}</button>`,
        )}
      </nav>
      ${this.cards()} ${this.bottomBar()}
      <div class="nav">
        <button aria-label="返回">
          <svg viewBox="0 0 38 38" fill="none" stroke="#888" stroke-width="2" stroke-linejoin="round">
            <path d="M36 4v30q0 3-3 1L4 21q-3-2 0-4L33 3q3-2 3 1z" />
          </svg>
        </button>
        <button aria-label="主页">
          <svg viewBox="0 0 38 38" fill="none" stroke="#888" stroke-width="2"><rect x="2" y="2" width="34" height="34" rx="8" /></svg>
        </button>
        <button aria-label="最近任务">
          <svg viewBox="0 0 38 38" stroke="#888" stroke-width="3"><path d="M1 3h36M1 19h36M1 35h36" /></svg>
        </button>
      </div>
    `;
  }
}
